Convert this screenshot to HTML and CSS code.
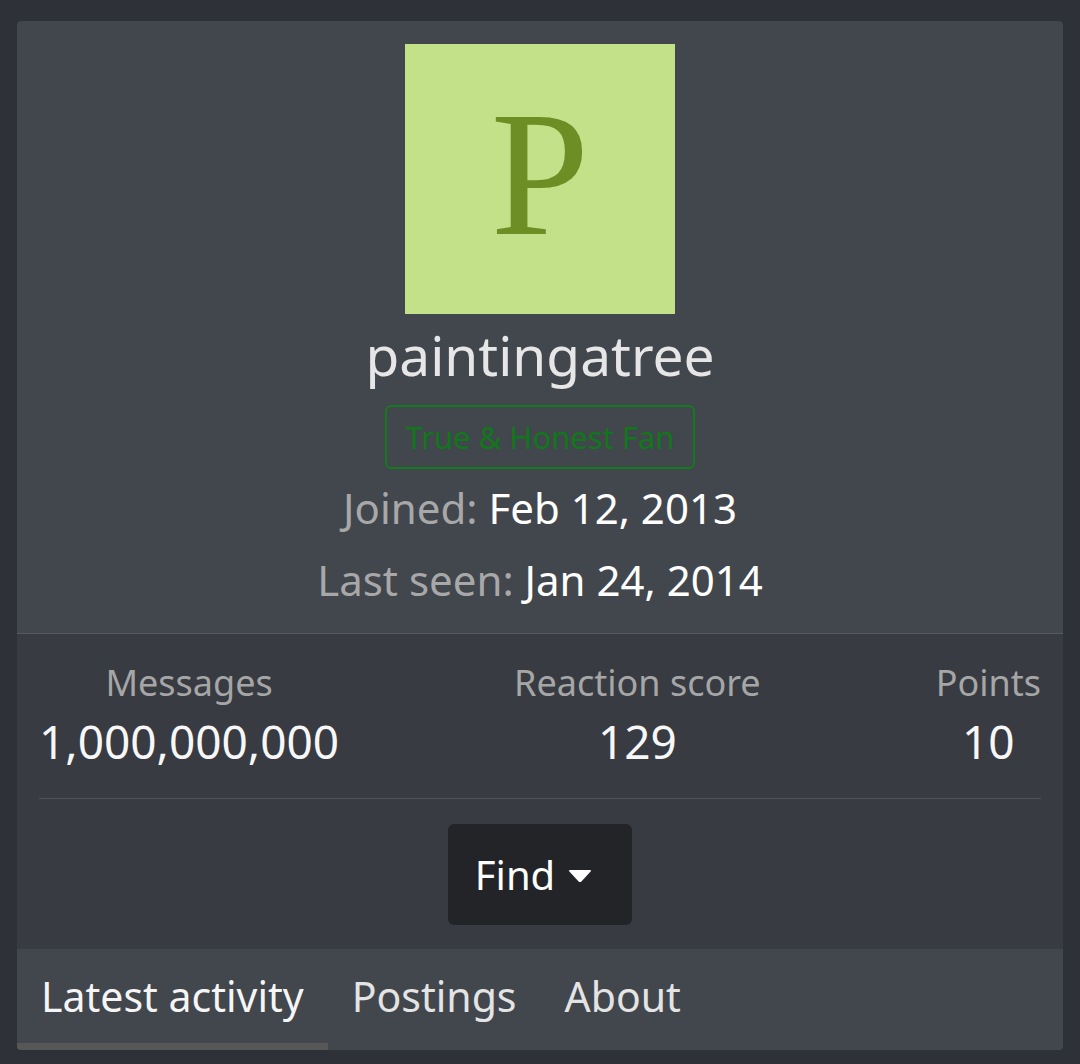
FILE: index.html
```html
<!DOCTYPE html>
<html lang="en">
<head>
<meta charset="utf-8">
<title>paintingatree</title>
<link rel="stylesheet" href="styles.css">
</head>
<body>
<div class="card">
  <div class="card-top">
    <div class="avatar"><span class="avatar-letter">P</span></div>
    <h1 class="username">paintingatree</h1>
    <div class="badge">True &amp; Honest Fan</div>
    <div class="info-row"><span class="info-label">Joined:</span> <span class="info-value">Feb 12, 2013</span></div>
    <div class="info-row"><span class="info-label">Last seen:</span> <span class="info-value">Jan 24, 2014</span></div>
  </div>
  <div class="card-stats">
    <dl class="stats">
      <div class="stat"><dt class="stat-label">Messages</dt><dd class="stat-value">1,000,000,000</dd></div>
      <div class="stat"><dt class="stat-label">Reaction score</dt><dd class="stat-value">129</dd></div>
      <div class="stat"><dt class="stat-label">Points</dt><dd class="stat-value">10</dd></div>
    </dl>
    <div class="actions">
      <button class="find-btn" type="button"><span>Find</span><svg class="caret" width="24" height="14" viewBox="0 0 24 14"><path d="M2 1 H22 Q24 1 22.6 2.6 L13.4 12.4 Q12 13.8 10.6 12.4 L1.4 2.6 Q0 1 2 1 Z" fill="#ffffff"/></svg></button>
    </div>
  </div>
  <nav class="tabs">
    <a class="tab tab-active">Latest activity</a>
    <a class="tab">Postings</a>
    <a class="tab">About</a>
  </nav>
</div>
</body>
</html>
```

FILE: styles.css
```css
html, body {
  background: #2e3137;
}
body {
  margin: 21px 17px 14px;
  font-family: "Noto Sans", "Open Sans", sans-serif;
  color: #f2f2f2;
}
.card {
  background: #42464d;
  border-radius: 4px;
  overflow: hidden;
  box-shadow: 0 0 10px rgba(0, 0, 0, 0.35);
}
.card-top {
  padding: 23px 23px 17px;
  text-align: center;
  border-bottom: 1px solid #575b61;
}
.avatar {
  width: 270px;
  height: 270px;
  margin: 0 auto;
  background: #c2e188;
  display: flex;
  align-items: center;
  justify-content: center;
}
.avatar-letter {
  font-family: "Liberation Serif", "Times New Roman", serif;
  font-size: 177px;
  line-height: 1;
  color: #6c8e24;
  position: relative;
  top: -5px;
}
.username {
  margin: 8px 0 0;
  font-size: 55px;
  font-weight: 400;
  line-height: 66px;
  color: #e6e6e6;
}
.badge {
  display: inline-block;
  margin-top: 17px;
  padding: 9px 18px;
  border: 2px solid #167a1c;
  border-radius: 6px;
  font-size: 31px;
  color: #10781a;
}
.info-row {
  margin-top: 3px;
  font-size: 42px;
  line-height: 72px;
}
.info-row + .info-row {
  margin-top: 0;
}
.info-label {
  color: #a8a8a8;
}
.info-value {
  color: #ffffff;
}
.card-stats {
  background: #383b42;
  padding: 24px 22px 24px;
}
.stats {
  margin: 0;
  padding-bottom: 26px;
  border-bottom: 1px solid #50545a;
  display: flex;
  justify-content: space-between;
}
.stat {
  text-align: center;
}
.stat-label {
  font-size: 36px;
  color: #a6a6a6;
}
.stat-value {
  margin: 3px 0 0;
  font-size: 46px;
  color: #f7f7f7;
}
.actions {
  margin-top: 25px;
  display: flex;
  justify-content: center;
}
.find-btn {
  height: 101px;
  padding: 0 40px 0 27px;
  display: inline-flex;
  align-items: center;
  gap: 13px;
  background: #222428;
  border: none;
  border-radius: 6px;
  font-family: "Noto Sans", "Open Sans", sans-serif;
  font-size: 40px;
  color: #ffffff;
}
.caret {
  display: block;
  margin-top: 2px;
}
.tabs {
  display: flex;
  background: #42464d;
}
.tab {
  padding: 19px 24px 19px;
  border-bottom: 7px solid transparent;
  font-size: 41px;
  color: #e4e4e4;
}
.tab-active {
  border-bottom-color: #575757;
  color: #f5f5f5;
}
```
